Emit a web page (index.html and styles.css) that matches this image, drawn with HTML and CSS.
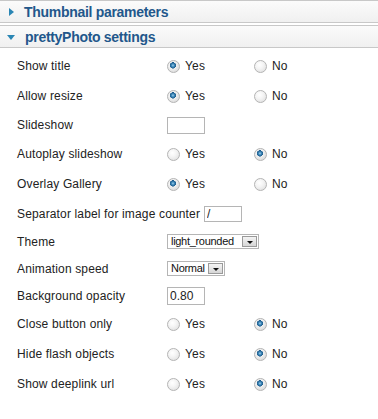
FILE: index.html
```html
<!DOCTYPE html>
<html>
<head>
<meta charset="utf-8">
<link rel="stylesheet" href="styles.css">
</head>
<body>
<div class="pane">
  <div class="toggler">
    <span class="arrow-right"></span>
    <span class="title">Thumbnail parameters</span>
  </div>
  <div class="toggler open">
    <span class="arrow-down"></span>
    <span class="title">prettyPhoto settings</span>
  </div>
  <div class="params">
    <div class="row r-radio">
      <span class="label">Show title</span>
      <label class="opt"><input type="radio" name="a" checked><span>Yes</span></label>
      <label class="opt"><input type="radio" name="a"><span>No</span></label>
    </div>
    <div class="row r-radio">
      <span class="label">Allow resize</span>
      <label class="opt"><input type="radio" name="b" checked><span>Yes</span></label>
      <label class="opt"><input type="radio" name="b"><span>No</span></label>
    </div>
    <div class="row r-field r-slide">
      <span class="label">Slideshow</span>
      <input class="text small" type="text" value="">
    </div>
    <div class="row r-radio">
      <span class="label">Autoplay slideshow</span>
      <label class="opt"><input type="radio" name="c"><span>Yes</span></label>
      <label class="opt"><input type="radio" name="c" checked><span>No</span></label>
    </div>
    <div class="row r-radio">
      <span class="label">Overlay Gallery</span>
      <label class="opt"><input type="radio" name="d" checked><span>Yes</span></label>
      <label class="opt"><input type="radio" name="d"><span>No</span></label>
    </div>
    <div class="row r-field r-sep">
      <span class="label auto">Separator label for image counter</span>
      <input class="text small sep" type="text" value="/">
    </div>
    <div class="row r-field">
      <span class="label">Theme</span>
      <span class="select theme"><span class="val">light_rounded</span><span class="btn"></span></span>
    </div>
    <div class="row r-field">
      <span class="label">Animation speed</span>
      <span class="select speed"><span class="val">Normal</span><span class="btn"></span></span>
    </div>
    <div class="row r-field">
      <span class="label">Background opacity</span>
      <input class="text small tall" type="text" value="0.80">
    </div>
    <div class="row r-radio">
      <span class="label">Close button only</span>
      <label class="opt"><input type="radio" name="e"><span>Yes</span></label>
      <label class="opt"><input type="radio" name="e" checked><span>No</span></label>
    </div>
    <div class="row r-radio">
      <span class="label">Hide flash objects</span>
      <label class="opt"><input type="radio" name="f"><span>Yes</span></label>
      <label class="opt"><input type="radio" name="f" checked><span>No</span></label>
    </div>
    <div class="row r-radio">
      <span class="label">Show deeplink url</span>
      <label class="opt"><input type="radio" name="g"><span>Yes</span></label>
      <label class="opt"><input type="radio" name="g" checked><span>No</span></label>
    </div>
  </div>
</div>
</body>
</html>
```
FILE: styles.css
```css
html, body {
  margin: 0;
  padding: 0;
  background: #fff;
}
body {
  font-family: "Liberation Sans", Arial, sans-serif;
  font-size: 12px;
  color: #222;
}
.pane {
  width: 378px;
}
.toggler {
  height: 21px;
  border-top: 1px solid #c8c8c8;
  border-bottom: 1px solid #c8c8c8;
  background: linear-gradient(#fbfbfb, #f0f0f0);
  display: flex;
  align-items: center;
  padding-left: 9px;
}
.toggler.open {
  margin-top: 2px;
  padding-left: 7px;
}
.title {
  font-size: 14px;
  font-weight: bold;
  letter-spacing: -0.3px;
  color: #22578b;
  margin-left: 10px;
}
.arrow-right {
  width: 0;
  height: 0;
  border-top: 4px solid transparent;
  border-bottom: 4px solid transparent;
  border-left: 5px solid #2a86b4;
}
.arrow-down {
  width: 0;
  height: 0;
  border-left: 4px solid transparent;
  border-right: 4px solid transparent;
  border-top: 5px solid #2a86b4;
  margin-top: 2px;
}
.params {
  padding: 3px 0 0 17px;
}
.row {
  display: flex;
  align-items: center;
}
.r-radio { height: 30px; }
.r-field { height: 27px; }
.r-slide { height: 28px; }
.r-sep { height: 29px; padding-top: 1px; box-sizing: border-box; }
.label {
  width: 150px;
  flex: none;
  letter-spacing: 0.15px;
}
.label.auto {
  width: auto;
  margin-right: 4px;
}
.opt {
  width: 87px;
  display: flex;
  align-items: center;
}
.opt span {
  margin-left: 5px;
  letter-spacing: 0.15px;
}
input[type=radio] {
  -webkit-appearance: none;
  appearance: none;
  margin: 0;
  width: 13px;
  height: 13px;
  border-radius: 50%;
  border: 1px solid #b4b4b4;
  box-sizing: border-box;
  background: radial-gradient(circle at 40% 35%, #ffffff 0%, #f4f4f4 40%, #dadada 100%);
}
input[type=radio]:checked {
  background:
    radial-gradient(circle at 45% 40%, #9fd0ee 0px, #3d87b8 1.5px, #1d5a8a 3px, rgba(0,0,0,0) 3.3px),
    radial-gradient(circle at 40% 35%, #ffffff 0%, #f0f0f0 40%, #d2d2d2 100%);
}
.text {
  font-family: "Liberation Sans", Arial, sans-serif;
  font-size: 12px;
  color: #222;
  border: 1px solid #b5b5b5;
  box-sizing: border-box;
  padding: 0 2px;
  margin: 0;
  height: 17px;
  background: #fff;
  outline: none;
}
.text.small { width: 38px; }
.text.sep { height: 16px; }
.text.tall { height: 18px; }
.select {
  display: flex;
  align-items: center;
  height: 15px;
  border: 1px solid #b5b5b5;
  box-sizing: border-box;
  font-size: 11px;
  letter-spacing: -0.3px;
  color: #111;
  background: #fff;
}
.select .val {
  flex: 1;
  padding-left: 3px;
  line-height: 13px;
}
.select .btn {
  width: 15px;
  height: 11px;
  margin-right: 1px;
  border: 1px solid #9a9a9a;
  box-sizing: border-box;
  background: linear-gradient(#f4f4f4, #d6d6d6);
  display: flex;
  align-items: center;
  justify-content: center;
}
.select .btn::after {
  content: "";
  width: 0;
  height: 0;
  border-left: 3px solid transparent;
  border-right: 3px solid transparent;
  border-top: 3px solid #111;
  margin-top: 1px;
}
.select.theme { width: 92px; }
.select.speed { width: 58px; }
```
